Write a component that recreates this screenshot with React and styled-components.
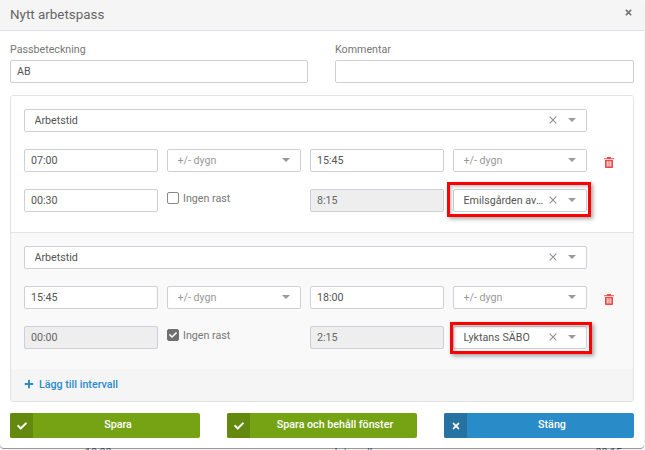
import React from "react";
import styled, { createGlobalStyle } from "styled-components";
import { FaCheck, FaPlus, FaTimes } from "react-icons/fa";

const GlobalStyle = createGlobalStyle`
  html, body {
    margin: 0;
    height: 450px;
    overflow: hidden;
    background: #fff;
    font-family: Roboto, "Liberation Sans", sans-serif;
    color: #555;
  }
  * { box-sizing: border-box; }
`;

function Clear() {
  return (
    <ClearIcon viewBox="0 0 8 8">
      <path d="M.7.7l6.6 6.6M7.3.7L.7 7.3" stroke="#929292" strokeWidth="1.1" fill="none" />
    </ClearIcon>
  );
}

function Trash() {
  return (
    <TrashIcon viewBox="0 0 10 11">
      <path
        fill="#ea4a48"
        fillRule="evenodd"
        d="M3.2 0h3.6l.5 1.2H10v1H0v-1h2.7zM1 3h8v7.2a.8.8 0 0 1-.8.8H1.8a.8.8 0 0 1-.8-.8zM2.7 4.2v5.4h1V4.2zm1.8 0v5.4h1V4.2zm1.8 0v5.4h1V4.2z"
      />
    </TrashIcon>
  );
}

function Select({ value, placeholder, clearable }) {
  return (
    <SelectBox>
      <SelectText $placeholder={placeholder}>{value}</SelectText>
      {clearable && <Clear />}
      <Caret />
    </SelectBox>
  );
}

function Interval({ start, end, brk, total, place, noBreak, shaded, mark }) {
  return (
    <Section $shaded={shaded}>
      <TypeRow>
        <Select value="Arbetstid" clearable />
      </TypeRow>
      <Row>
        <Input value={start} readOnly />
        <Select value="+/- dygn" placeholder />
        <Input value={end} readOnly />
        <Select value="+/- dygn" placeholder />
        <Trash />
      </Row>
      <Row>
        <Input value={brk} readOnly disabled={noBreak} />
        <CheckLabel>
          <CheckBox $checked={noBreak}>{noBreak && <FaCheck />}</CheckBox>
          Ingen rast
        </CheckLabel>
        <Input value={total} readOnly disabled />
        <Marked $top={mark.top} $left={mark.left} $right={mark.right}>
          <Select value={place} clearable />
        </Marked>
      </Row>
    </Section>
  );
}

export default function App() {
  return (
    <>
      <GlobalStyle />
      <Backdrop>
        <span>10:00</span>
        <span>Intervall</span>
        <span>08:15</span>
      </Backdrop>
      <Modal>
        <Header>
          <Title>Nytt arbetspass</Title>
          <Close />
        </Header>
        <Body>
          <Fields>
            <Field>
              <Label>Passbeteckning</Label>
              <Input value="AB" readOnly />
            </Field>
            <Field>
              <Label>Kommentar</Label>
              <Input value="" readOnly />
            </Field>
          </Fields>
          <Panel>
            <Interval
              start="07:00"
              end="15:45"
              brk="00:30"
              total="8:15"
              place="Emilsgården avdelning 2"
              mark={{ top: 7, left: 6, right: 4 }}
            />
            <Interval
              start="15:45"
              end="18:00"
              brk="00:00"
              total="2:15"
              place="Lyktans SÄBO"
              mark={{ top: 4, left: 3, right: 5 }}
              noBreak
              shaded
            />
            <AddRow>
              <FaPlus />
              Lägg till intervall
            </AddRow>
          </Panel>
          <Buttons>
            <Button $color="#75a314" $dark="#64890f">
              <span><FaCheck /></span>
              Spara
            </Button>
            <Button $color="#75a314" $dark="#64890f">
              <span><FaCheck /></span>
              Spara och behåll fönster
            </Button>
            <Button $color="#2a8bc9" $dark="#2672a3">
              <span><FaTimes /></span>
              Stäng
            </Button>
          </Buttons>
        </Body>
      </Modal>
    </>
  );
}

const Backdrop = styled.div`
  position: absolute;
  top: 447px;
  left: 85px;
  width: 537px;
  display: flex;
  justify-content: space-between;
  font-size: 10.7px;
  line-height: 12px;
  color: #5a6f86;
`;

const Modal = styled.div`
  position: relative;
  width: 644px;
  height: 448px;
  background: #fff;
  border-radius: 0 0 4px 4px;
  box-shadow: 0 1px 1px rgba(0, 0, 0, 0.45);
`;

const Header = styled.div`
  height: 31px;
  display: flex;
  align-items: center;
  justify-content: space-between;
  padding: 0 11px 2px 10px;
  background: #f5f5f5;
  border-bottom: 1px solid #dfe1e6;
`;

const Title = styled.div`
  font-size: 13.4px;
  color: #666;
`;

const Close = styled(FaTimes)`
  font-size: 9px;
  color: #777;
  margin-top: -3px;
`;

const Body = styled.div`
  padding: 10px 10px 0;
`;

const Fields = styled.div`
  display: grid;
  grid-template-columns: 298px 299px;
  column-gap: 27px;
`;

const Field = styled.div`
  display: flex;
  flex-direction: column;
`;

const Label = styled.label`
  font-size: 10.7px;
  line-height: 15px;
  height: 19px;
  padding-top: 1px;
  color: #777;
`;

const Input = styled.input`
  width: 100%;
  height: 23px;
  padding: 0 6px;
  font: 10.7px Roboto, "Liberation Sans", sans-serif;
  color: #555;
  background: #fff;
  border: 1px solid #cdd0d6;
  border-radius: 2px;
  outline: none;

  &:disabled {
    background: #eee;
    color: #666;
    opacity: 1;
  }
`;

const Panel = styled.div`
  margin-top: 12px;
  height: 307px;
  border: 1px solid #e2e3e6;
  border-radius: 3px;
  display: flex;
  flex-direction: column;
  overflow: hidden;
`;

const Section = styled.div`
  height: ${(p) => (p.$shaded ? 137 : 136)}px;
  padding: 13px 46px 0 13px;
  background: ${(p) => (p.$shaded ? "#f9f9f9" : "#fff")};
  border-top: ${(p) => (p.$shaded ? "1px solid #e4e4e4" : "none")};
`;

const TypeRow = styled.div`
  margin-bottom: 17px;
`;

const Row = styled.div`
  position: relative;
  display: grid;
  grid-template-columns: repeat(4, 134px);
  column-gap: 9px;
  margin-bottom: 17px;
  align-items: start;
`;

const SelectBox = styled.div`
  display: flex;
  align-items: center;
  width: 100%;
  height: 23px;
  padding: 0 10px 1px 9.5px;
  background: #fff;
  border: 1px solid #cdd0d6;
  border-radius: 2px;
  font-size: 10.7px;
`;

const SelectText = styled.span`
  flex: 1;
  min-width: 0;
  white-space: nowrap;
  overflow: hidden;
  text-overflow: ellipsis;
  padding-right: 2px;
  color: ${(p) => (p.$placeholder ? "#999" : "#555")};
`;

const ClearIcon = styled.svg`
  width: 8px;
  height: 8px;
  flex: none;
  margin-right: 11px;
`;

const Caret = styled.span`
  flex: none;
  width: 0;
  height: 0;
  border-left: 4px solid transparent;
  border-right: 4px solid transparent;
  border-top: 4px solid #999;
`;

const TrashIcon = styled.svg`
  position: absolute;
  left: 580px;
  top: 8px;
  width: 10px;
  height: 11px;
`;

const CheckLabel = styled.label`
  display: flex;
  align-items: center;
  gap: 4px;
  height: 12px;
  margin-top: 3px;
  font-size: 10.7px;
  color: #777;
`;

const CheckBox = styled.span`
  display: flex;
  align-items: center;
  justify-content: center;
  width: 12px;
  height: 12px;
  border-radius: 2px;
  border: 1px solid ${(p) => (p.$checked ? "#707070" : "#888")};
  background: ${(p) => (p.$checked ? "#707070" : "#fff")};
  color: #fff;
  font-size: 8px;
`;

const Marked = styled.div`
  position: relative;

  &::after {
    content: "";
    position: absolute;
    top: -${(p) => p.$top}px;
    bottom: -5px;
    left: -${(p) => p.$left}px;
    right: -${(p) => p.$right}px;
    border: 3px solid #f00;
    box-shadow: 2px 2px 4px rgba(0, 0, 0, 0.35), inset 2px 2px 3px rgba(0, 0, 0, 0.2);
  }
`;

const AddRow = styled.div`
  flex: 1;
  display: flex;
  align-items: center;
  gap: 5px;
  padding: 0 0 2px 13px;
  background: #f5f5f5;
  font-size: 10.7px;
  font-weight: 500;
  color: #2a8bc9;

  svg {
    font-size: 10px;
  }
`;

const Buttons = styled.div`
  display: grid;
  grid-template-columns: repeat(3, 190px);
  column-gap: 27px;
  margin-top: 11px;
`;

const Button = styled.button`
  position: relative;
  height: 25px;
  padding: 0 0 2px 26px;
  border: none;
  border-radius: 2px;
  background: ${(p) => p.$color};
  color: #fff;
  font: 500 10.7px Roboto, "Liberation Sans", sans-serif;
  text-align: center;

  span {
    position: absolute;
    left: 0;
    top: 0;
    bottom: 0;
    width: 23px;
    display: flex;
    align-items: center;
    justify-content: center;
    background: ${(p) => p.$dark};
    border-radius: 2px 0 0 2px;
    font-size: 10px;
  }
`;
